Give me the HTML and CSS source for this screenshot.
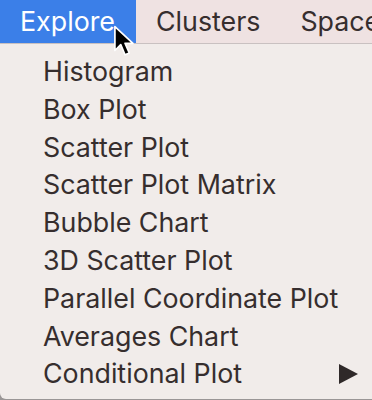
FILE: index.html
```html
<!DOCTYPE html>
<html lang="en">
<head>
    <meta charset="UTF-8">
    <title>Explore menu</title>
    <link rel="stylesheet" href="styles.css">
</head>
<body>
    <div class="menubar">
        <span class="menu-title active">Explore</span>
        <span class="menu-title">Clusters</span>
        <span class="menu-title">Space</span>
    </div>
    <ul class="menu">
        <li>Histogram</li>
        <li>Box Plot</li>
        <li>Scatter Plot</li>
        <li>Scatter Plot Matrix</li>
        <li>Bubble Chart</li>
        <li>3D Scatter Plot</li>
        <li>Parallel Coordinate Plot</li>
        <li>Averages Chart</li>
        <li class="submenu">Conditional Plot
            <svg class="arrow" width="19" height="20" viewBox="0 0 19 20"><path d="M0 0 L19 10 L0 20 Z" fill="#2f2929"/></svg>
        </li>
    </ul>
    <svg class="cursor" width="24" height="34" viewBox="0 0 22 32">
        <path d="M1.5 1.5 L1.5 24 L7 18.5 L11 28 L15 26.3 L11 17.2 L18.5 17.2 Z" fill="#000" stroke="#fff" stroke-width="1.6" stroke-linejoin="round"/>
    </svg>
</body>
</html>
```

FILE: styles.css
```css
body {
    margin: 0;
    width: 372px;
    height: 400px;
    overflow: hidden;
    background: #9a9696;
    font-family: Inter, "Noto Sans", sans-serif;
    color: #362e2e;
    position: relative;
}

.menubar {
    display: flex;
    height: 43px;
    background: #efe2e2;
    border-bottom: 1px solid #c9c1c1;
    white-space: nowrap;
    overflow: hidden;
}

.menu-title {
    font-size: 26.8px;
    line-height: 43px;
    padding: 0 20px;
}

.menu-title.active {
    background: #3b7fe8;
    color: #fff;
    padding-right: 21px;
}

.menu {
    list-style: none;
    margin: 0;
    padding: 9px 0 6px 0;
    background: #f1ecea;
    border-bottom-left-radius: 6px;
}

.menu li {
    font-size: 26.8px;
    line-height: 37.8px;
    padding-left: 43px;
    white-space: nowrap;
}

.submenu {
    display: flex;
    align-items: center;
    justify-content: space-between;
    padding-right: 14px;
}

.cursor {
    position: absolute;
    left: 113px;
    top: 25px;
}
```
